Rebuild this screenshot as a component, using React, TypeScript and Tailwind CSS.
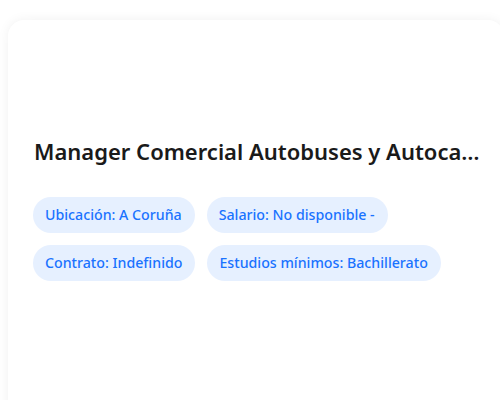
const chips = [
    "Ubicación: A Coruña",
    "Salario: No disponible -",
    "Contrato: Indefinido",
    "Estudios mínimos: Bachillerato",
];

export default function App() {
    return (
        <div className="w-[500px] h-[400px] overflow-hidden bg-white" style={{ fontFamily: '"Noto Sans", "Open Sans", sans-serif' }}>
            <div className="ml-2 mt-5 w-[496px] h-[420px] bg-white rounded-2xl shadow-[0_0_12px_rgba(0,0,0,0.06)] pl-[26px] pr-[22px] pt-[116px]">
                <h1 className="text-[22px] leading-[30px] font-semibold text-[#1a1a1a] truncate">
                    Manager Comercial Autobuses y Autocares
                </h1>
                <div className="mt-[31px] flex flex-wrap gap-3 -ml-px">
                    {chips.map(c => (
                        <span key={c} className="h-9 pl-3 pr-[13px] flex items-center rounded-full bg-[#e6f0ff] text-[#1a73ff] text-[14.2px] font-medium">
                            {c}
                        </span>
                    ))}
                </div>
            </div>
        </div>
    );
}
